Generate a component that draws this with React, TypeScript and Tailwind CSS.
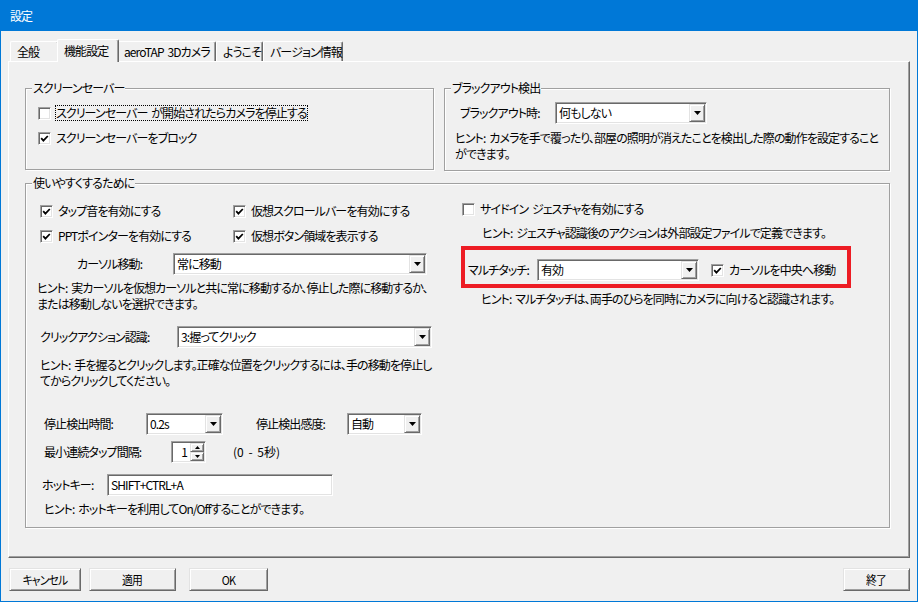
import React from "react";

const sunken =
  "border border-t-[#a0a0a0] border-l-[#a0a0a0] border-r-white border-b-white shadow-[inset_1px_1px_0_#696969,inset_-1px_-1px_0_#e3e3e3]";
const raised =
  "border border-t-[#e3e3e3] border-l-[#e3e3e3] border-r-[#696969] border-b-[#696969] shadow-[inset_1px_1px_0_#fff,inset_-1px_-1px_0_#a0a0a0]";

function Arrow() {
  return (
    <svg width="7" height="4" viewBox="0 0 7 4">
      <path d="M0 0H7L3.5 4Z" fill="#000" />
    </svg>
  );
}

function Combo({ value, className = "" }: { value: string; className?: string }) {
  return (
    <div className={`flex h-[22px] bg-white ${sunken} ${className}`}>
      <span className="flex-1 truncate pl-[3px] leading-[20px]">{value}</span>
      <span className={`my-[1px] mr-[1px] flex w-[16px] items-center justify-center bg-[#f0f0f0] ${raised}`}>
        <Arrow />
      </span>
    </div>
  );
}

function Check({
  checked = false,
  focus = false,
  children,
  className = "",
}: {
  checked?: boolean;
  focus?: boolean;
  children: React.ReactNode;
  className?: string;
}) {
  return (
    <div className={`flex h-[16px] items-center ${focus ? "gap-[4px]" : "gap-[5px]"} ${className}`}>
      <span className={`flex h-[13px] w-[13px] shrink-0 items-center justify-center bg-white ${sunken}`}>
        {checked && (
          <svg width="9" height="9" viewBox="0 0 9 9">
            <path d="M1.2 4.2 3.4 6.6 7.8 2" fill="none" stroke="#000" strokeWidth="1.8" />
          </svg>
        )}
      </span>
      <span className={focus ? "border border-dotted border-black leading-[14px]" : "leading-[16px]"}>
        {children}
      </span>
    </div>
  );
}

function Group({
  title,
  className = "",
  children,
}: {
  title: string;
  className?: string;
  children: React.ReactNode;
}) {
  return (
    <div className={`relative border border-[#a0a0a0] shadow-[inset_1px_1px_0_#fff,1px_1px_0_#fff] ${className}`}>
      <span className="absolute -top-[9px] left-[6px] bg-[#f0f0f0] px-[1px] leading-[16px]">{title}</span>
      {children}
    </div>
  );
}

function Tab({ label, active = false, className = "" }: { label: string; active?: boolean; className?: string }) {
  if (active) {
    return (
      <div
        className={`relative z-10 -mx-[2px] -mb-[1px] flex h-[23px] items-center rounded-t-[2px] border-l border-t border-r border-l-white border-t-white border-r-[#696969] bg-[#f0f0f0] pl-[6px] shadow-[inset_-1px_0_0_#a0a0a0] ${className}`}
      >
        {label}
      </div>
    );
  }
  return (
    <div
      className={`flex h-[20px] items-center rounded-t-[2px] border-l border-t border-r border-l-white border-t-white border-r-[#696969] bg-[#f0f0f0] pl-[6px] shadow-[inset_-1px_0_0_#a0a0a0] ${className}`}
    >
      {label}
    </div>
  );
}

function Button({ label, className = "" }: { label: string; className?: string }) {
  return (
    <div className={`flex h-[23px] items-center justify-center bg-[#f0f0f0] ${raised} ${className}`}>
      <span className="inline-block scale-x-90">{label}</span>
    </div>
  );
}

export default function App() {
  return (
    <div className="flex h-[602px] w-[918px] flex-col overflow-hidden whitespace-nowrap border-x border-b border-[#0078d7] bg-[#f0f0f0] text-[12px] leading-[16px] tracking-[-0.9px] text-black [font-family:'Noto_Sans_CJK_JP',sans-serif] [font-feature-settings:'palt'] [word-spacing:2px]">
      <div className="flex h-[31px] shrink-0 items-center bg-[#0078d7] pl-[9px] text-white">設定</div>

      <div className="mt-[8px] flex h-[22px] items-end pl-[9px]">
        <Tab label="全般" className="w-[49px]" />
        <Tab label="機能設定" active className="w-[62px]" />
        <Tab label="aeroTAP 3Dカメラ" className="w-[99px]" />
        <Tab label="ようこそ" className="w-[47px]" />
        <Tab label="バージョン情報" className="w-[80px]" />
      </div>

      <div className="mx-[7px] h-[497px] shrink-0 border-t border-l border-r border-b border-t-white border-l-white border-r-[#696969] border-b-[#696969] pl-[16px] pt-[26px] shadow-[inset_-1px_-1px_0_#a0a0a0]">
        <div className="flex">
          <Group title="スクリーンセーバー" className="h-[82px] w-[409px] pl-[12px] pt-[16px]">
            <Check focus>スクリーンセーバー が開始されたらカメラを停止する</Check>
            <Check checked className="mt-[9px]">
              スクリーンセーバーをブロック
            </Check>
          </Group>
          <Group title="ブラックアウト検出" className="ml-[10px] h-[83px] w-[446px] pl-[10px] pt-[13px]">
            <div className="ml-[5px] flex h-[22px] items-center">
              <span className="w-[95px]">ブラックアウト時:</span>
              <Combo value="何もしない" className="w-[152px]" />
            </div>
            <p className="mt-[6px] leading-[16px]">
              ヒント: カメラを手で覆ったり、部屋の照明が消えたことを検出した際の動作を設定すること
              <br />
              ができます。
            </p>
          </Group>
        </div>

        <Group title="使いやすくするために" className="mt-[12px] flex h-[345px] w-[865px]">
          <div className="flex w-[418px] shrink-0 flex-col">
            <div className="mt-[19px] flex pl-[14px]">
              <Check checked className="w-[193px]">
                タップ音を有効にする
              </Check>
              <Check checked>仮想スクロールバーを有効にする</Check>
            </div>
            <div className="mt-[9px] flex pl-[14px]">
              <Check checked className="w-[193px]">
                PPTポインターを有効にする
              </Check>
              <Check checked>仮想ボタン領域を表示する</Check>
            </div>
            <div className="mt-[9px] flex h-[22px] items-center pl-[51px]">
              <span className="w-[96px]">カーソル移動:</span>
              <Combo value="常に移動" className="w-[254px]" />
            </div>
            <p className="mt-[5px] pl-[11px] leading-[16px]">
              ヒント: 実カーソルを仮想カーソルと共に常に移動するか、停止した際に移動するか、
              <br />
              または移動しないを選択できます。
            </p>
            <div className="mt-[14px] flex h-[22px] items-center pl-[14px]">
              <span className="w-[137px]">クリックアクション認識:</span>
              <Combo value="3:握ってクリック" className="w-[255px]" />
            </div>
            <p className="mt-[9px] pl-[14px] leading-[16px]">
              ヒント: 手を握るとクリックします。正確な位置をクリックするには、手の移動を停止し
              <br />
              てからクリックしてください。
            </p>
            <div className="mt-[24px] flex h-[22px] items-center pl-[18px]">
              <span className="w-[102px]">停止検出時間:</span>
              <Combo value="0.2s" className="w-[77px]" />
              <span className="ml-[33px] w-[91px]">停止検出感度:</span>
              <Combo value="自動" className="w-[75px]" />
            </div>
            <div className="mt-[6px] flex h-[22px] items-center pl-[18px]">
              <span className="w-[127px]">最小連続タップ間隔:</span>
              <div className={`flex h-[22px] w-[35px] bg-white ${sunken}`}>
                <span className="flex-1 pr-[3px] text-right leading-[20px]">1</span>
                <div className="my-[1px] mr-[1px] flex w-[14px] flex-col">
                  <span className={`flex h-[9px] items-center justify-center bg-[#f0f0f0] ${raised}`}>
                    <svg width="5" height="3" viewBox="0 0 5 3">
                      <path d="M0 3H5L2.5 0Z" fill="#000" />
                    </svg>
                  </span>
                  <span className={`flex h-[9px] items-center justify-center bg-[#f0f0f0] ${raised}`}>
                    <svg width="5" height="3" viewBox="0 0 5 3">
                      <path d="M0 0H5L2.5 3Z" fill="#000" />
                    </svg>
                  </span>
                </div>
              </div>
              <span className="ml-[27px] tracking-[0px]">(0 - 5秒)</span>
            </div>
            <div className="mt-[11px] flex h-[22px] items-center pl-[16px]">
              <span className="w-[65px]">ホットキー:</span>
              <div className={`h-[22px] w-[226px] bg-white pl-[3px] leading-[20px] ${sunken}`}>SHIFT+CTRL+A</div>
            </div>
            <p className="mt-[5px] pl-[18px] leading-[16px]">ヒント: ホットキーを利用してOn/Offすることができます。</p>
          </div>

          <div className="flex flex-1 flex-col">
            <Check className="mt-[17px] pl-[18px]">サイドイン ジェスチャを有効にする</Check>
            <p className="mt-[8px] pl-[38px] leading-[16px]">
              ヒント: ジェスチャ認識後のアクションは外部設定ファイルで定義できます。
            </p>
            <div className="ml-[17px] mt-[5px] flex h-[42px] w-[390px] items-center border-[4px] border-[#ed1c24] pl-[3px] pt-[6px]">
              <span className="w-[69px]">マルチタッチ:</span>
              <Combo value="有効" className="w-[162px]" />
              <Check checked className="ml-[12px]">
                カーソルを中央へ移動
              </Check>
            </div>
            <p className="mt-[3px] pl-[37px] leading-[16px]">
              ヒント: マルチタッチは、両手のひらを同時にカメラに向けると認識されます。
            </p>
          </div>
        </Group>
      </div>

      <div className="mt-[10px] flex pl-[8px] pr-[7px]">
        <Button label="キャンセル" className="w-[72px]" />
        <Button label="適用" className="ml-[8px] w-[87px]" />
        <Button label="OK" className="ml-[13px] w-[79px]" />
        <Button label="終了" className="ml-auto w-[67px]" />
      </div>
    </div>
  );
}
